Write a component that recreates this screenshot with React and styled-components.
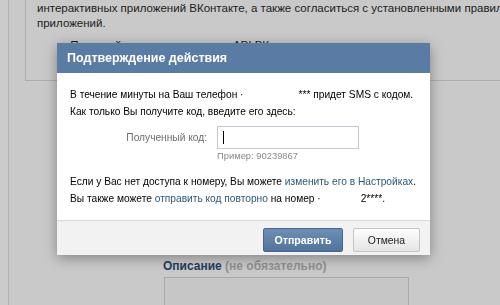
import styled, { createGlobalStyle } from "styled-components";

const Global = createGlobalStyle`
  html, body {
    margin: 0;
    padding: 0;
    width: 500px;
    height: 305px;
    overflow: hidden;
    background: #c9c9c9;
    font-family: "Liberation Sans", Arial, sans-serif;
  }
`;

const Page = styled.div`
  height: 305px;
  overflow: hidden;
  padding-left: 8px;
  background: #cbcbcb;
`;

const Column = styled.div`
  height: 100%;
  border-left: 1px solid #b3b3b3;
  background: #c9c9c9;
`;

const IntroBox = styled.div`
  margin-left: 16px;
  height: 81px;
  box-sizing: border-box;
  border-left: 1px solid #adadad;
  border-bottom: 1px solid #adadad;
  padding: 1px 0 0 11px;
  white-space: nowrap;
  overflow: hidden;
`;

const IntroText = styled.p`
  margin: 0;
  font-size: 11.5px;
  line-height: 15px;
  color: #1c1c1c;
`;

const Bullet = styled.p`
  margin: 8px 0 0 26px;
  font-size: 11.5px;
  color: #1c1c1c;
`;

const Section = styled.div`
  padding: 178px 0 0 154px;
`;

const Label = styled.div`
  font-size: 12px;
  font-weight: bold;
  color: #213c5c;
  margin-bottom: 4px;
`;

const Optional = styled.span`
  color: #8f8f8f;
`;

const TextArea = styled.div`
  width: 243px;
  height: 40px;
  margin-left: 1px;
  border: 1px solid #a9a9a9;
  background: #c6c6c6;
`;

const Overlay = styled.div`
  position: fixed;
  inset: 0;
  padding: 43px 0 0 57px;
  display: flex;
  align-items: flex-start;
`;

const Box = styled.div`
  width: 373px;
  background: #fff;
  box-shadow: 0 3px 12px rgba(0, 0, 0, 0.35);
`;

const Header = styled.div`
  height: 30px;
  background: #5a7ca4;
  color: #fff;
  font-weight: bold;
  font-size: 12.5px;
  line-height: 30px;
  padding-left: 10px;
`;

const Body = styled.div`
  padding: 13px 0 13px 13px;
  font-size: 10.2px;
  line-height: 17px;
  color: #000;
`;

const Para = styled.p`
  margin: ${(p) => p.$top || 0}px 0 0;
  white-space: nowrap;
`;

const Link = styled.a`
  color: #2b587a;
  text-decoration: none;
`;

const Hidden = styled.span`
  display: inline-block;
  width: ${(p) => p.$w}px;
`;

const FormRow = styled.div`
  display: grid;
  grid-template-columns: 137px 142px;
  column-gap: 10px;
  margin-top: 6px;
  align-items: center;
`;

const FieldLabel = styled.label`
  text-align: right;
  color: #6c6c6c;
`;

const Input = styled.div`
  height: 23px;
  box-sizing: border-box;
  border: 1px solid #c0cad5;
  position: relative;
  &::after {
    content: "";
    position: absolute;
    left: 5px;
    top: 4px;
    width: 1px;
    height: 13px;
    background: #000;
  }
`;

const Hint = styled.div`
  grid-column: 2;
  color: #8a8a8a;
  font-size: 9.4px;
  line-height: 14px;
`;

const Footer = styled.div`
  border-top: 1px solid #d9d9d9;
  background: #f2f2f2;
  padding: 7px 10px 3px 0;
  height: 35px;
  box-sizing: border-box;
  display: flex;
  justify-content: flex-end;
  gap: 10px;
`;

const Button = styled.button`
  height: 24px;
  padding: 0;
  width: ${(p) => p.$w}px;
  font-family: inherit;
  font-size: ${(p) => (p.$primary ? 10.6 : 10.4)}px;
  border-radius: 2px;
  cursor: pointer;
  color: ${(p) => (p.$primary ? "#fff" : "#222")};
  border: 1px solid ${(p) => (p.$primary ? "#45678f" : "#c4c4c4")};
  background: ${(p) =>
    p.$primary
      ? "linear-gradient(#6e8fb4, #52739b)"
      : "linear-gradient(#fdfdfd, #e5e5e5)"};
  font-weight: ${(p) => (p.$primary ? "bold" : "normal")};
`;

export default function App() {
  return (
    <>
      <Global />
      <Page>
        <Column>
          <IntroBox>
            <IntroText>
              интерактивных приложений ВКонтакте, а также согласиться с установленными правилами размещения
            </IntroText>
            <IntroText>приложений.</IntroText>
            <Bullet>▫ Прочитайте документацию по API ВК</Bullet>
          </IntroBox>
          <Section>
            <Label>
              Описание <Optional>(не обязательно)</Optional>
            </Label>
            <TextArea />
          </Section>
        </Column>
      </Page>
      <Overlay>
        <Box>
          <Header>Подтверждение действия</Header>
          <Body>
            <Para>
              В течение минуты на Ваш телефон ·<Hidden $w={55} />*** придет SMS с кодом.
            </Para>
            <Para>Как только Вы получите код, введите его здесь:</Para>
            <FormRow>
              <FieldLabel>Полученный код:</FieldLabel>
              <Input />
              <Hint>Пример: 90239867</Hint>
            </FormRow>
            <Para $top={10}>
              Если у Вас нет доступа к номеру, Вы можете{" "}
              <Link>изменить его в Настройках</Link>.
            </Para>
            <Para>
              Вы также можете <Link>отправить код повторно</Link> на номер ·
              <Hidden $w={40} />2****.
            </Para>
          </Body>
          <Footer>
            <Button $primary $w={80}>Отправить</Button>
            <Button $w={67}>Отмена</Button>
          </Footer>
        </Box>
      </Overlay>
    </>
  );
}
